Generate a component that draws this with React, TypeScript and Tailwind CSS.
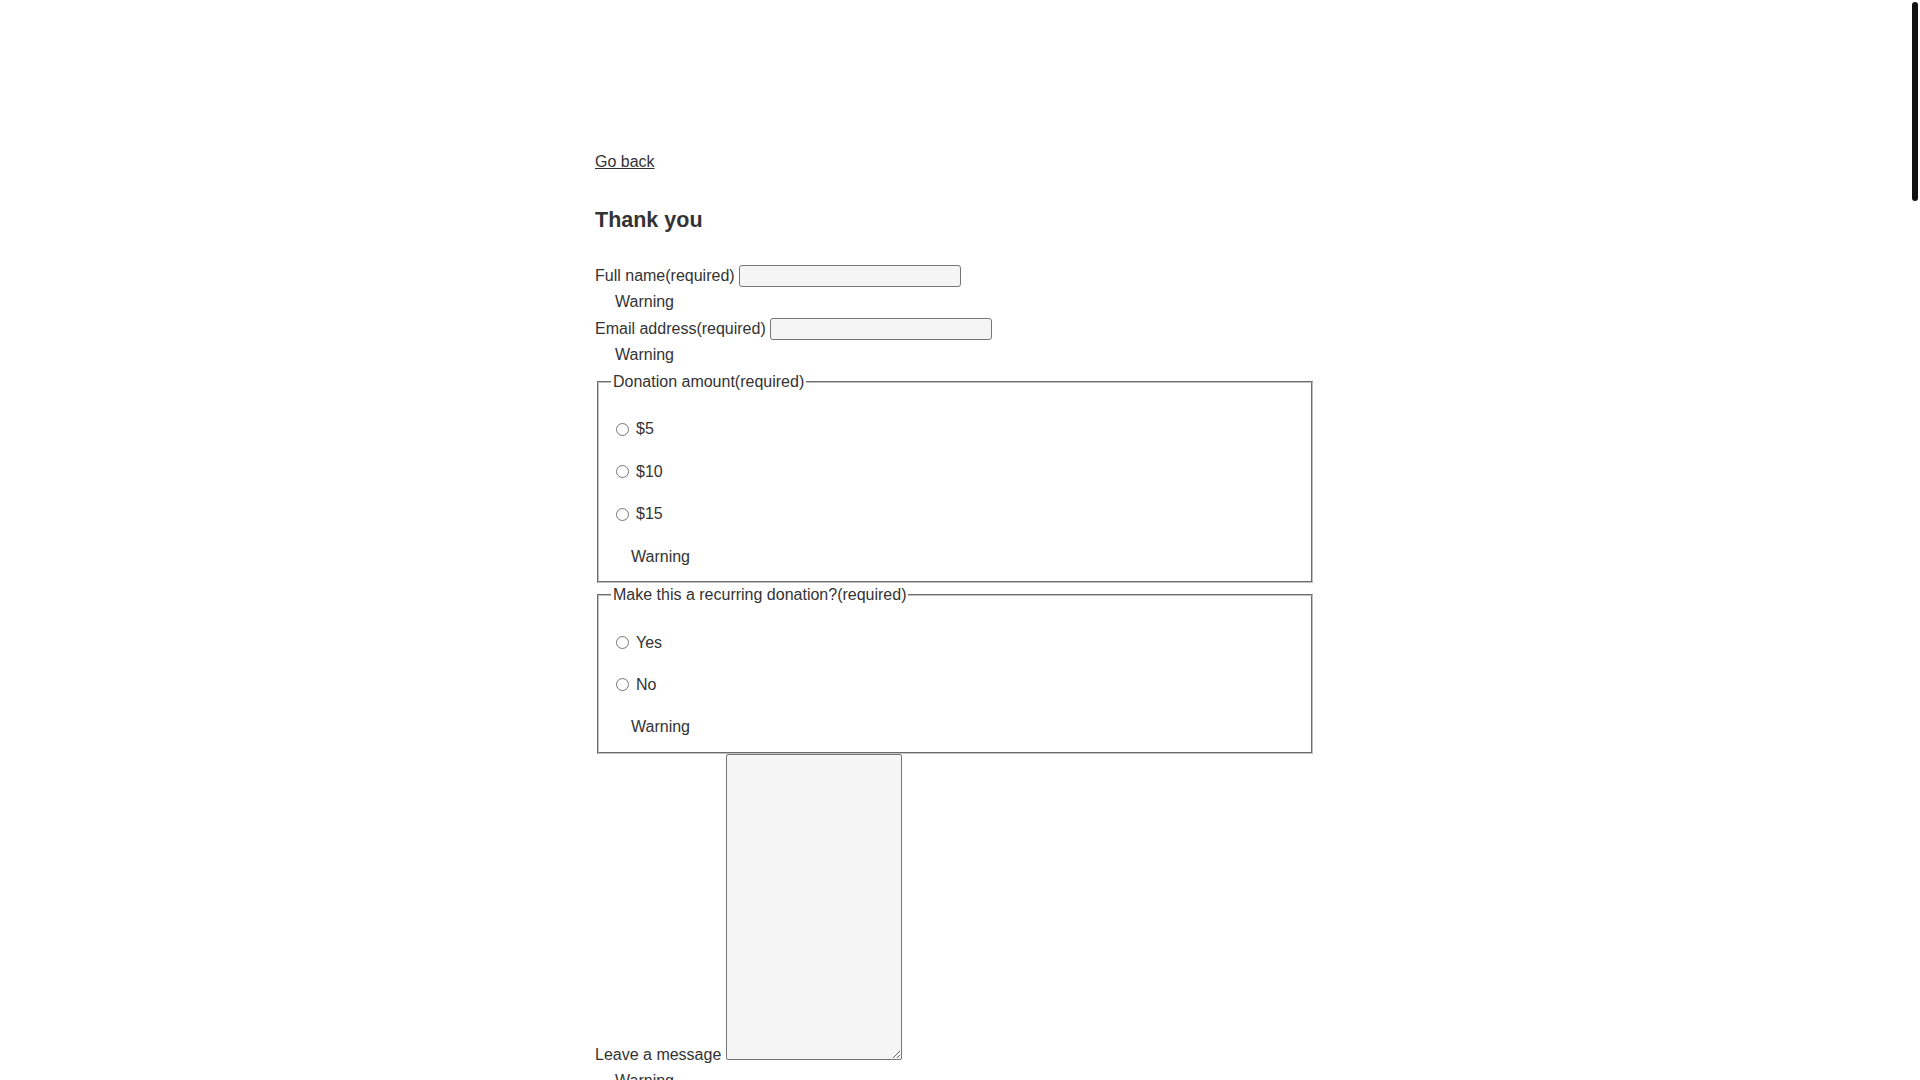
export default function App() {
  return (
    <div className="flex min-h-screen bg-white font-['Liberation_Sans',Arial,sans-serif] text-base text-[#333]">
      <main className="flex-1">
        <div className="mx-auto w-[720px] pt-[153px]">
          <a href="#" className="block w-fit leading-[18px] underline">
            Go back
          </a>
          <h2 className="mt-[37px] text-[21.5px] font-bold leading-[24px]">Thank you</h2>

          <form>
            <div className="mt-[33px] flex h-[22px] items-center">
              <label htmlFor="fullname" className="leading-[18px]">
                Full name(required)
              </label>
              <input
                id="fullname"
                type="text"
                className="ml-[4.5px] h-[22px] w-[222px] rounded-[3px] border border-[#767676] bg-[#f5f5f5] px-[2px]"
              />
            </div>
            <div className="mt-[6px] pl-[20px] leading-[18px]">Warning</div>

            <div className="mt-[6.5px] flex h-[22px] items-center">
              <label htmlFor="email" className="leading-[18px]">
                Email address(required)
              </label>
              <input
                id="email"
                type="email"
                className="ml-[4.5px] h-[22px] w-[222px] rounded-[3px] border border-[#767676] bg-[#f5f5f5] px-[2px]"
              />
            </div>
            <div className="mt-[6px] pl-[20px] leading-[18px]">Warning</div>

            <fieldset className="mx-[2px] mt-[9px] border-2 border-[#c0c0c0] px-3 pb-[3px] [border-style:groove]">
              <legend className="px-[2px] leading-[18px]">Donation amount(required)</legend>
              <div className="pt-[17.25px]">
                {["$5", "$10", "$15"].map((amount) => (
                  <div key={amount} className="flex h-[42.5px] items-center">
                    <input type="radio" name="amount" id={`amount-${amount}`} className="ml-[5px] mr-[3px]" />
                    <label htmlFor={`amount-${amount}`} className="ml-[4px] leading-[18px]">
                      {amount}
                    </label>
                  </div>
                ))}
                <div className="flex h-[42.5px] items-center pl-[20px] leading-[18px]">Warning</div>
              </div>
            </fieldset>

            <fieldset className="mx-[2px] mt-[3.5px] border-2 border-[#c0c0c0] px-3 pb-[3px] [border-style:groove]">
              <legend className="px-[2px] leading-[18px]">Make this a recurring donation?(required)</legend>
              <div className="pt-[17.25px]">
                {["Yes", "No"].map((answer) => (
                  <div key={answer} className="flex h-[42px] items-center">
                    <input type="radio" name="recurring" id={`recurring-${answer}`} className="ml-[5px] mr-[3px]" />
                    <label htmlFor={`recurring-${answer}`} className="ml-[4px] leading-[18px]">
                      {answer}
                    </label>
                  </div>
                ))}
                <div className="flex h-[43px] items-center pl-[20px] leading-[18px]">Warning</div>
              </div>
            </fieldset>

            <div>
              <label htmlFor="message">Leave a message</label>{" "}
              <textarea
                id="message"
                className="h-[306px] w-[176px] rounded-[2px] border border-[#767676] bg-[#f5f5f5] p-[2px]"
              />
            </div>
            <div className="mt-[5px] pl-[20px] leading-[18px]">Warning</div>
          </form>
        </div>
      </main>

      {/* scrollbar gutter */}
      <div className="w-[10px] shrink-0 px-[2px] pt-[2px]" aria-hidden="true">
        <div className="h-[199px] w-[6px] rounded-full bg-[#111]" />
      </div>
    </div>
  );
}
